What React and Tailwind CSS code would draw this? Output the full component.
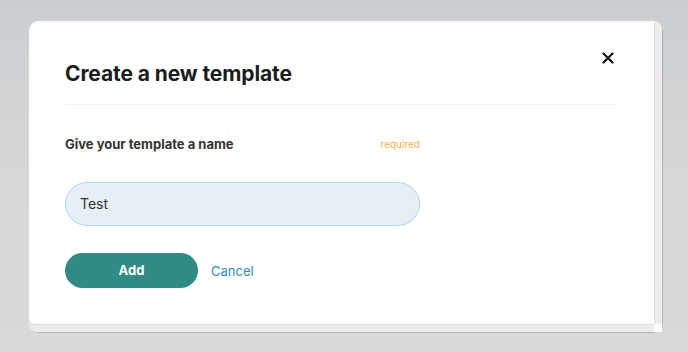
import React from "react";

export default function App() {
  return (
    <div
      className="w-[688px] h-[352px] overflow-hidden bg-[#d9d9d9] bg-gradient-to-b from-[#cbced1] via-[#d6d7d8] to-[#d9d9d9] pt-[21px] pl-[29px]"
      style={{ fontFamily: "Inter, 'Liberation Sans', sans-serif" }}
    >
      <div className="relative w-[633px] h-[311px] rounded-[10px] bg-[#e8e8e8] shadow-[1px_1px_1px_rgba(0,0,0,0.18)] flex flex-col">
        <div className="flex flex-1">
          <div className="relative w-[625px] bg-white rounded-tl-[10px] rounded-bl-[6px] pt-[39px] pl-[36px] pr-[37px]">
            <h1 className="text-[21px] leading-[28px] font-bold text-[#1c1c1c] tracking-[-0.1px]">
              Create a new template
            </h1>
            <div className="mt-[16px] h-px bg-[#eef0f2]" />
            <div className="mt-[30px] w-[355px] flex items-center justify-between">
              <span className="text-[13px] font-bold text-[#333333]">Give your template a name</span>
              <span className="text-[10px] text-[#f6b042]">required</span>
            </div>
            <div className="mt-[27px] w-[355px] h-[44px] rounded-full border border-[#a9d8f6] bg-[#e6eef6] flex items-center pl-[14px] text-[14px] text-[#333333]">
              Test
            </div>
            <div className="mt-[27px] flex items-center">
              <button className="w-[133px] h-[35px] pt-px rounded-full bg-[#308b84] text-white text-[13px] font-bold">
                Add
              </button>
              <span className="ml-[13px] pt-[3px] text-[13px] text-[#2d8ac7]">Cancel</span>
            </div>
            <svg
              className="absolute left-[573px] top-[31px]"
              width="12"
              height="12"
              viewBox="0 0 12 12"
            >
              <path d="M1.5 1.5 L10.5 10.5 M10.5 1.5 L1.5 10.5" stroke="#111" strokeWidth="2.2" strokeLinecap="round" />
            </svg>
          </div>
          <div className="w-[8px] bg-[#ececec] border-l border-[#dcdcdc] rounded-tr-[10px]" />
        </div>
        <div className="flex h-[8px]">
          <div className="w-[625px] bg-[#ececec] border-t border-[#dcdcdc] rounded-bl-[8px]" />
          <div className="w-[8px] bg-white" />
        </div>
      </div>
    </div>
  );
}
